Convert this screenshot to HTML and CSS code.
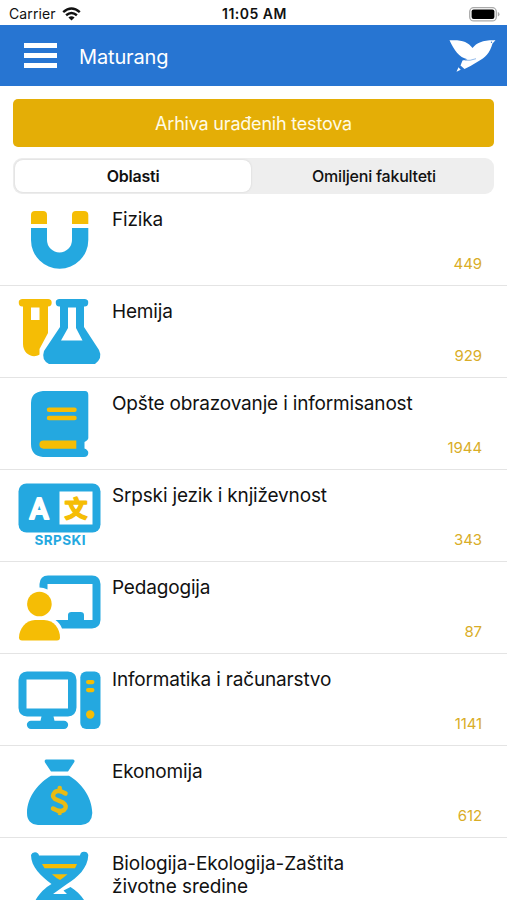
FILE: index.html
```html
<!DOCTYPE html>
<html lang="sr">
<head>
<meta charset="utf-8">
<title>Maturang</title>
<link rel="stylesheet" href="styles.css">
</head>
<body>
<div class="status">
  <div class="carrier"><span>Carrier</span>
    <svg width="19" height="14" viewBox="0 0 19 14" fill="none" stroke="#111" stroke-width="2.5"><path d="M1.2 5.1Q9.5-2 17.8 5.1M4.1 8.2Q9.5 3.7 14.9 8.2"/><path d="M6.4 10.4Q9.5 7.9 12.6 10.4L9.5 13.6Z" fill="#111" stroke="none"/></svg>
  </div>
  <div class="clock">11:05 AM</div>
  <svg class="battery" width="31" height="15" viewBox="0 0 31 15"><rect x=".7" y=".7" width="26.6" height="13.2" rx="4" fill="#fff" stroke="#aaa" stroke-width="1.3"/><rect x="2.6" y="2.6" width="22.8" height="9.4" rx="2" fill="#000"/><path d="M28.8 5Q30.5 5.5 30.5 7.3T28.8 9.6Z" fill="#aaa"/></svg>
</div>
<header class="bar">
  <div class="burger"><i></i><i></i><i></i></div>
  <h1>Maturang</h1>
  <svg class="bird" width="48" height="34" viewBox="447 39 48 34" fill="#fff"><path d="M448.500 40.300C460 39.500 467 41.500 471.500 48C476 42.500 482 40 494.500 40.300L491.500 43.500C489 53 484 58 477 61.500Q470 66 463.500 69L459.500 65.500L461.500 60.500L466.500 59.300C458 57.500 453 50 448.500 40.300Z"/><path d="M457.500 67.300L459.700 69.800L455.500 71.800Z"/><path d="M463.500 60.300Q469 61 475 58.700" fill="none" stroke="#2775d2" stroke-width=".5"/><circle cx="490.500" cy="42.300" r=".7" fill="#2775d2"/></svg>
</header>
<main>
  <button class="archive">Arhiva urađenih testova</button>
  <div class="tabs"><div class="tab on">Oblasti</div><div class="tab">Omiljeni fakulteti</div></div>
  <ul class="list">
    <li><svg viewBox="0 194 112 92"><g class="y"><path d="M31 224V215Q31 211 35 211H43Q47 211 47 215V224ZM72 224V215Q72 211 76 211H84Q88.300 211 88.300 215V224Z"/></g><path d="M31 228H47V240A12.400 12.400 0 0 0 72 240V228H88.300V240A28.600 28.600 0 0 1 31 240Z"/></svg>
      <div class="text"><h2>Fizika</h2><span>449</span></div></li>
    <li><svg viewBox="0 286 112 92"><path class="y" fill-rule="evenodd" d="M22 299H48A3.700 3.700 0 0 1 48 306.400V333L39.500 349V354.500C33 359 23 354 23 344V306.400A3.700 3.700 0 0 1 22 299ZM31 307.500V320H39.500V307.500Z"/><path fill-rule="evenodd" d="M59 299H85A3.700 3.700 0 0 1 84 306.400V327L99 350Q103 358 95 364H49Q41 360 44 351L60 327V306.400A3.700 3.700 0 0 1 59 299ZM68 307.500V328L61 340.500H82.500L76 328V307.500Z"/></svg>
      <div class="text"><h2>Hemija</h2><span>929</span></div></li>
    <li><svg viewBox="0 378 112 92"><path d="M43 391H85Q88.300 391 88.300 395V438Q88.300 440 84.500 442V448.500Q88.300 450 88.300 453Q88 457 84 457H43Q31 456 31 444V403Q31 392 43 391Z"/><path class="y" d="M49 407.500H74.500A2.100 2.100 0 0 1 74.500 412H49A2.100 2.100 0 0 1 49 407.500ZM49 415.700H74.500A2.100 2.100 0 0 1 74.500 420.200H49A2.100 2.100 0 0 1 49 415.700ZM43.500 440.500H76.300V448.700H43.500A4.100 4.100 0 0 1 43.500 440.500Z"/></svg>
      <div class="text"><h2>Opšte obrazovanje i informisanost</h2><span>1944</span></div></li>
    <li><svg viewBox="0 470 112 92"><rect x="18.500" y="483.500" width="82" height="49" rx="8"/><path fill="#fff" d="M59.500 491.500H92.500V524.500H59.500Z"/><text class="latin" x="39" y="518.500" text-anchor="middle">A</text><text class="han" x="76" y="517" text-anchor="middle">文</text><text class="label" x="60" y="545.200" text-anchor="middle" textLength="51">SRPSKI</text></svg>
      <div class="text"><h2>Srpski jezik i književnost</h2><span>343</span></div></li>
    <li><svg viewBox="0 562 112 92"><path d="M39.500 587.500V584Q40 575.500 48 575.500H92Q100 575.500 100.500 584V620Q100 628 92 628.500H62Q60 623 55.500 620H68V615Q68 612 71.500 612H80.500Q84 612 84 615V620H92.500V584H47.500V589.500Q43.500 587.500 39.500 587.500Z"/><g class="y"><circle cx="39.400" cy="604" r="12.300"/><path d="M35 620H44C54 620 60 629 60 637.500Q60 640.500 57 640.500H22Q19 640.500 19 637.500C19 629 26 620 35 620Z"/></g></svg>
      <div class="text"><h2>Pedagogija</h2><span>87</span></div></li>
    <li><svg viewBox="0 654 112 92"><path fill-rule="evenodd" d="M27 671.500H68Q76.500 672 76.500 680V707.500Q76 716 68 716.500H53.500L54.500 720.700H64A4.100 4.100 0 0 1 64 729H31A4.100 4.100 0 0 1 31 720.700H40.500L41.500 716.500H27Q19 716 18.500 708V680Q19 672 27 671.500ZM26.500 679.500V708.500H68V679.500Z"/><rect x="80.300" y="671.500" width="20.200" height="57.500" rx="6"/><g class="y"><rect x="86" y="680" width="8.500" height="4.200" rx="2.100"/><rect x="86" y="688" width="8.500" height="4.200" rx="2.100"/><circle cx="90.200" cy="714.500" r="4.200"/></g></svg>
      <div class="text"><h2>Informatika i računarstvo</h2><span>1141</span></div></li>
    <li><svg viewBox="0 746 112 92"><path d="M46 759.500H73Q75.500 760 74 762.500L68 771.500H51L45 762.500Q44 760 46 759.500ZM51 775.800H69C80 782 92 796 92.300 813Q92 824 81 825H38Q27 824 27 813C27 796 40 782 51 775.800Z"/><path class="dollar" d="M65.500 793.500Q59 789.500 55 792Q51 796 55 799L63 802.500Q68 806 64 810Q60 812.500 53 808.500M59.700 788V791M59.700 811V813"/></svg>
      <div class="text"><h2>Ekonomija</h2><span>612</span></div></li>
    <li><svg viewBox="0 838 112 92"><path fill-rule="evenodd" d="M31 855A4.200 4.200 0 0 1 39 855.500H80A4.200 4.200 0 0 1 88.300 855C88 868 77 878 67 884L53 894H67L63.500 890.500L70.500 887C80 893 88 902 88.300 914H31C32 902 41 890 51.500 884C41 876 31 867 31 855Z"/><path class="y" d="M42 864H77L75 868.300H44.500ZM52 874.200H67.500Q63 878 60 880Q56 878 52 874.200Z"/></svg>
      <div class="text"><h2 class="wide">Biologija-Ekologija-Zaštita<br>životne sredine</h2></div></li>
  </ul>
</main>
</body>
</html>
```
FILE: styles.css
```css
* { box-sizing: border-box; }
html, body { margin: 0; height: 900px; overflow: hidden; }
body { background: #fff; color: #111; font-family: Inter, "Noto Sans CJK SC", sans-serif; }
h1, h2, ul { margin: 0; padding: 0; font-weight: 400; }
.status { height: 25px; padding: 0 7px 0 9px; display: grid; grid-template-columns: 1fr auto 1fr; align-items: center; font-size: 14px; line-height: 27px; }
.carrier { display: flex; gap: 6px; align-items: center; letter-spacing: .1px; }
.clock { font-weight: 600; letter-spacing: .5px; }
.battery { justify-self: end; margin-top: 1px; }
.bar { height: 61px; background: #2775d2; display: flex; align-items: center; padding: 0 11px 0 24px; color: #fff; }
.burger { width: 33px; display: grid; gap: 5px; }
.burger i { height: 5px; background: #fff; }
.bar h1 { margin: 2px 0 0 22px; font-size: 20px; letter-spacing: -.15px; flex: 1; }
main { padding-top: 13px; }
.archive { display: block; width: 481px; height: 48px; margin: 0 0 11px 13px; border: 0; border-radius: 5px; background: #e4ae06; color: #fffbe5; font: 400 18px Inter, sans-serif; letter-spacing: -.2px; padding: 0; }
.tabs { width: 481px; height: 36px; margin-left: 13px; padding: 2px; border-radius: 9px; background: #eee; display: grid; grid-template-columns: 236px 1fr; }
.tab { display: grid; place-items: center; padding-left: 5px; font-size: 16px; font-weight: 500; letter-spacing: -.22px; border-radius: 8px; }
.tab.on { padding: 0; background: #fff; font-weight: 600; box-shadow: 0 0 2px #ccc; }
.list { list-style: none; }
.list li { height: 92px; border-bottom: 1px solid #e4e4e4; display: flex; }
.list svg { width: 112px; height: 92px; flex: none; fill: #24a8e0; }
.list .y { fill: #f5bd05; }
.text { flex: 1; padding: 14px 25px 12px 0; display: flex; flex-direction: column; justify-content: space-between; }
.text h2 { font-size: 19px; line-height: 23px; letter-spacing: -.17px; white-space: nowrap; }
.text h2.wide { letter-spacing: -.08px; }
.text span { align-self: flex-end; color: #d9ad27; font-size: 15px; line-height: 19px; letter-spacing: -.1px; }
.latin { font: 500 29px Roboto, sans-serif; fill: #fff; stroke: #fff; stroke-width: 2px; stroke-linejoin: round; }
.han { font: 700 23px "Noto Sans CJK SC", sans-serif; fill: #f5bd05; stroke: #f5bd05; stroke-width: 1.5px; stroke-linejoin: round; }
.label { font: 700 13.5px Inter, sans-serif; }
.dollar { fill: none; stroke: #e9bb13; stroke-width: 4.5px; stroke-linecap: round; stroke-linejoin: round; }
```
